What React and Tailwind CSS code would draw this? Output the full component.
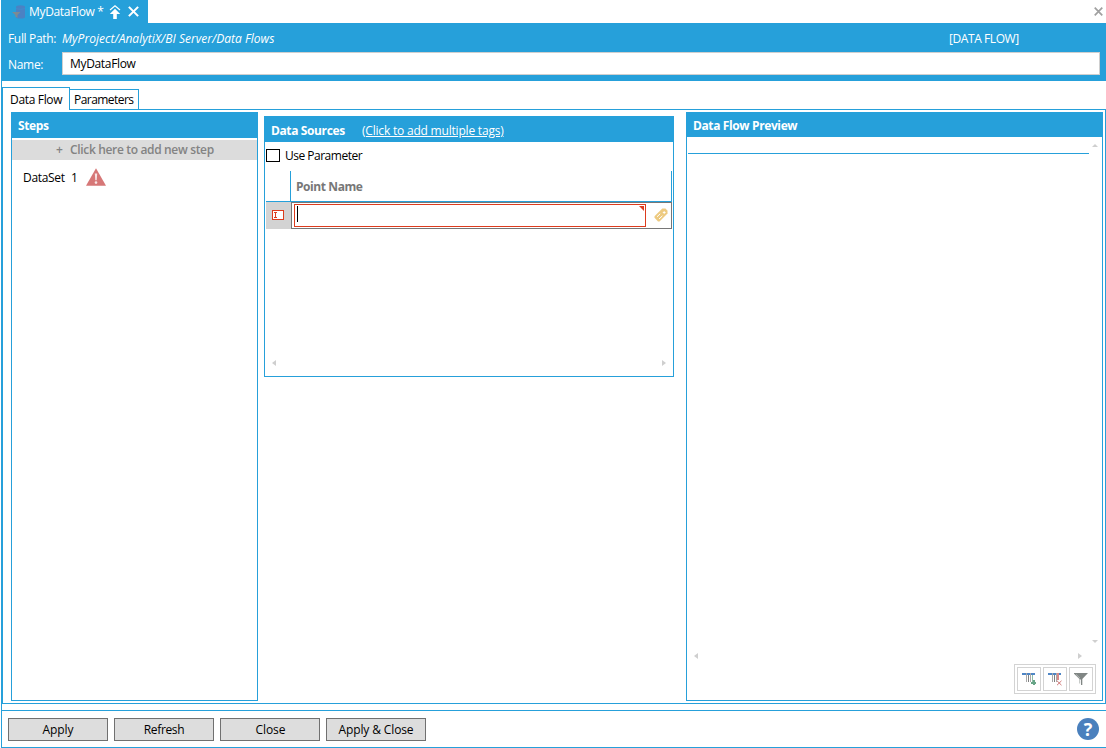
import clsx from "clsx";

const footerButtons = [
  { label: "Apply", tracking: "tracking-[-0.05px]" },
  { label: "Refresh", tracking: "tracking-[-0.35px]" },
  { label: "Close", tracking: "tracking-[-0.1px] pl-px" },
  { label: "Apply & Close", tracking: "tracking-[-0.12px]" },
];

function DataFlowIcon() {
  return (
    <svg className="w-[14px] h-[14px]" viewBox="0 0 14 14">
      <path d="M4 2 Q4 0.3 8.5 0.3 Q13 0.3 13 2 V12 Q13 13.5 8.5 13.5 Q4 13.5 4 12 Z" fill="#4b82c3" />
      <path d="M4 3.5 Q8.5 5.3 13 3.5" fill="none" stroke="#3c8fd0" strokeWidth="0.8" />
      <path d="M0 7 H8.5 L5.5 10 V13 L3.3 11.5 V10 Z" fill="#7d8a92" />
    </svg>
  );
}

function UploadIcon() {
  return (
    <svg className="w-3 h-[14px]" viewBox="0 0 12 14" fill="#fff">
      <path d="M1 5 L6 0.8 L11 5" fill="none" stroke="#fff" strokeWidth="1.2" />
      <path d="M6 3.8 L11.2 9 H7.8 V14 H4.2 V9 H0.8 Z" />
    </svg>
  );
}

function CrossIcon({ className }) {
  return (
    <svg className={className} viewBox="0 0 10 10" fill="none" stroke="currentColor" strokeWidth="1.9">
      <path d="M0.8 0.8 L9.2 9.2 M9.2 0.8 L0.8 9.2" />
    </svg>
  );
}

function WarningIcon() {
  return (
    <svg className="w-5 h-[18px]" viewBox="0 0 20 18">
      <path d="M10 0.3 L20 17.7 H0 Z" fill="#d67777" />
      <path d="M8.8 5.5 H11.2 L10.7 12.2 H9.3 Z" fill="#f7e4e4" />
      <circle cx="10" cy="14.6" r="1.3" fill="#f7e4e4" />
    </svg>
  );
}

function EditRowIcon() {
  return (
    <svg className="w-3 h-[10px]" viewBox="0 0 12 10" shapeRendering="crispEdges">
      <rect x="0.5" y="0.5" width="11" height="9" fill="#fff" stroke="#dc3c1e" />
      <path d="M2 2.5 H5 M3.5 2 V8 M2 7.5 H5" stroke="#dc3c1e" />
    </svg>
  );
}

function TagIcon() {
  return (
    <svg className="w-[14px] h-[14px]" viewBox="0 0 14 14">
      <path d="M8.3 0.5 H11.5 L13.5 2.8 V5.5 L5.5 13.5 H4 L0.5 9.8 V8.3 Z" fill="#edca80" />
      <path d="M3 8.8 L6.2 5.8 M5 11 L8.4 7.8" stroke="#fff" strokeWidth="1" />
      <path d="M8.8 4.5 H11.6 M10.2 3.1 V5.9" stroke="#fff" strokeWidth="0.9" />
    </svg>
  );
}

function Arrow({ dir }) {
  const points = {
    left: "5,0 5,6 1,3",
    right: "1,0 1,6 5,3",
    up: "0,4 6,4 3,1",
    down: "0,1 6,1 3,4",
  };
  return (
    <svg className="w-[6px] h-[6px]" viewBox="0 0 6 6">
      <polygon points={points[dir]} fill="#cfcfcf" />
    </svg>
  );
}

function ColumnsIcon({ remove }) {
  return (
    <svg className="w-[14px] h-[14px]" viewBox="0 0 14 14" shapeRendering="crispEdges">
      <rect x="0" y="1" width="13" height="2" fill="#4f86c6" />
      <path d="M4.5 1 V10" stroke="#a8a8a8" />
      <path d="M6.5 3 V10" stroke="#808080" />
      <path d="M8.5 1 V10" stroke="#a8a8a8" />
      {remove ? (
        <>
          <rect x="9" y="1" width="2" height="7" fill="#d98a8a" />
          <path d="M9 8.8 L13.5 13.2 M13.5 8.8 L9 13.2" stroke="#c96a6a" strokeWidth="0.9" shapeRendering="auto" />
        </>
      ) : (
        <>
          <path d="M10.5 3 V10" stroke="#8dbda6" />
          <path d="M9 11 H14 M12 8 V13" stroke="#68a588" strokeWidth="2" />
        </>
      )}
    </svg>
  );
}

function FilterIcon() {
  return (
    <svg className="w-[14px] h-[14px]" viewBox="0 0 14 14">
      <path d="M0 1 H14 L8.3 7 V13 H7 V7.4 H6 L0 1.8 Z" fill="#808684" />
      <path d="M5.7 7 V11.5" stroke="#a8adab" strokeWidth="0.8" />
      <path d="M2 2.4 L6 6.2" stroke="#c8cbca" strokeWidth="0.7" />
    </svg>
  );
}

function Panel({ title, className, headerClass, children }) {
  return (
    <section className={clsx("flex flex-col border border-[#26a0da] bg-white", className)}>
      <header className={clsx("-mx-px -mt-px shrink-0 bg-[#26a0da] flex items-center text-white tracking-[-0.38px]", headerClass)}>
        {title}
      </header>
      {children}
    </section>
  );
}

export default function App() {
  return (
    <div className="w-[1106px] h-[748px] flex flex-col overflow-hidden bg-white pl-px font-['Open_Sans','Noto_Sans',sans-serif] text-xs leading-4 tracking-[-0.33px] text-black whitespace-nowrap">
      {/* Document tab */}
      <div className="h-[23px] flex justify-between shrink-0">
        <div className="w-[147px] bg-[#26a0da] text-white flex items-center pl-[11px]">
          <DataFlowIcon />
          <span className="ml-[3px] w-[75px]">MyDataFlow *</span>
          <span className="ml-[5px]"><UploadIcon /></span>
          <CrossIcon className="ml-[7px] w-[11px] h-[11px]" />
        </div>
        <CrossIcon className="w-[9px] h-[9px] mt-[7px] mr-[3px] text-[#a0a0a0]" />
      </div>

      {/* Path and name */}
      <div className="h-[58px] shrink-0 bg-[#26a0da] text-white pl-[7px] pr-[6px]">
        <div className="h-[29px] flex items-center pt-[3px]">
          <span className="w-[54px]">Full Path:</span>
          <span className="italic w-[887px] tracking-[0.02px]">MyProject/AnalytiX/BI Server/Data Flows</span>
          <span className="tracking-[-0.42px]">[DATA FLOW]</span>
        </div>
        <div className="flex items-center">
          <span className="w-[54px] pt-[2px] tracking-[-0.3px]">Name:</span>
          <div className="flex-1 h-[23px] border border-[#cfcfcf] bg-white text-black pl-[7px] leading-[22px]">
            MyDataFlow
          </div>
        </div>
      </div>

      <div className="flex-1 min-h-0 flex flex-col border-l border-b border-[#26a0da]">
        {/* Tabs */}
        <div className="h-[28px] pt-[6px] flex items-end shrink-0">
          <div className="w-[68px] h-[23px] -mb-px relative z-10 bg-white border border-b-0 border-[#26a0da] pl-[7px] leading-[23px]">
            Data Flow
          </div>
          <div className="w-[69px] h-5 border border-l-0 border-b-0 border-[#26a0da] pl-[4px] leading-5 tracking-[-0.55px]">
            Parameters
          </div>
        </div>

        <main className="w-[1104px] h-[595px] shrink-0 border border-[#26a0da] flex items-start pl-2 pt-[2px]">
          <Panel
            className="w-[247px] h-[589px]"
            headerClass="h-[26px] pl-[7px] pt-[2px] font-bold"
            title="Steps"
          >
            <div className="mt-[2px] h-5 bg-[#dcdcdc] text-[#838383] font-semibold flex items-center pb-px pl-[44px]">
              <span className="w-[14px]">+</span>
              <span className="tracking-[-0.34px]">Click here to add new step</span>
            </div>
            <div className="flex items-center h-[34px] pl-[11px]">
              <span className="w-[48px] pt-px">DataSet</span>
              <span className="w-[15px] pt-px">1</span>
              <WarningIcon />
            </div>
          </Panel>

          <Panel
            className="ml-[6px] mt-1 w-[410px] h-[261px]"
            headerClass="h-[26px] pl-[7px] pt-[3px]"
            title={
              <>
                <span className="w-[91px] font-bold">Data Sources</span>
                <span className="underline tracking-[-0.2px]">(Click to add multiple tags)</span>
              </>
            }
          >
            <label className="flex items-center h-[26px] pl-px tracking-[-0.5px]">
              <span className="w-[14px] h-[13px] border border-black mr-[5px]" />
              <span className="pt-px">Use Parameter</span>
            </label>
            <div className="mt-[3px] ml-px w-[406px] h-[31px] border-b border-r border-[#26a0da] flex">
              <div className="w-[25px] border-r border-[#26a0da]" />
              <div className="pl-[5px] leading-[31px] font-bold text-[#777] tracking-[-0.42px]">Point Name</div>
            </div>
            <div className="ml-px w-[406px] h-[27px] flex">
              <div className="w-[25px] bg-[#d3d3d3] flex items-center pl-[6px] pb-px">
                <EditRowIcon />
              </div>
              <div className="flex-1 border border-[#777] flex items-center pl-[2px]">
                <div className="relative w-[352px] h-[23px] border border-[#dc3c1e] p-[2px] pt-px">
                  <div className="w-px h-4 bg-black" />
                  <svg className="absolute right-[1px] top-[1px] w-[5px] h-[5px]" viewBox="0 0 5 5">
                    <path d="M0 0 H5 V5 Z" fill="#dc3c1e" />
                  </svg>
                </div>
                <span className="ml-[8px] mb-[2px]"><TagIcon /></span>
              </div>
            </div>
            <div className="mt-auto flex justify-between pl-[6px] pr-[6px] pb-[10px]">
              <Arrow dir="left" />
              <Arrow dir="right" />
            </div>
          </Panel>

          <Panel
            className="ml-3 w-[417px] h-[589px]"
            headerClass="h-[25px] pl-[7px] pt-[3px] font-bold"
            title="Data Flow Preview"
          >
            <div className="h-[17px] flex items-start justify-between pl-px pr-1">
              <div className="w-[401px] h-[17px] border-b border-[#26a0da]" />
              <span className="mt-[6px]"><Arrow dir="up" /></span>
            </div>
            <div className="flex-1 flex items-end justify-end pr-1">
              <Arrow dir="down" />
            </div>
            <div className="h-[22px] pt-[8px] flex justify-between pl-[6px] pr-[19px]">
              <Arrow dir="left" />
              <Arrow dir="right" />
            </div>
            <div className="self-end mt-[-3px] mr-[6px] mb-[6px] w-[82px] h-[30px] shrink-0 border border-[#d3d3d3] flex gap-[2px] p-[2px]">
              <button className="w-6 h-6 border border-[#d3d3d3] flex items-center justify-center">
                <ColumnsIcon />
              </button>
              <button className="w-6 h-6 border border-[#d3d3d3] flex items-center justify-center">
                <ColumnsIcon remove />
              </button>
              <button className="w-6 h-6 border border-[#d3d3d3] flex items-center justify-center">
                <FilterIcon />
              </button>
            </div>
          </Panel>
        </main>

        {/* Footer */}
        <footer className="mt-[6px] flex-1 border-t border-[#26a0da] flex items-center pl-[6px] pr-[7px] gap-[6px]">
          {footerButtons.map(({ label, tracking }) => (
            <button
              key={label}
              className={clsx("w-[100px] h-[23px] border border-[#707070] bg-[#ddd] leading-[22px]", tracking)}
            >
              {label}
            </button>
          ))}
          <div className="ml-auto w-[22px] h-[22px] rounded-full bg-[#4a80bd] text-white text-lg font-bold flex items-center justify-center">
            ?
          </div>
        </footer>
      </div>
    </div>
  );
}
